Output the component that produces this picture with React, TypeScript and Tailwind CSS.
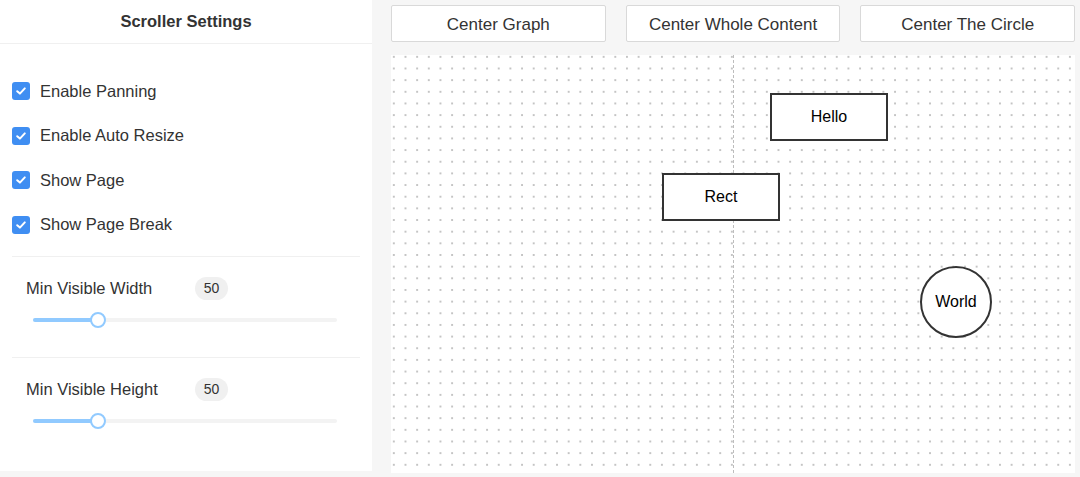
import React from "react";

function Check({ label }: { label: string }) {
  return (
    <div className="flex items-center h-[18px]">
      <div className="w-[18px] h-[18px] rounded-[3px] bg-[#3f8ef2] flex items-center justify-center">
        <svg width="12" height="12" viewBox="0 0 12 12">
          <path d="M2.2 6.2 L4.9 8.6 L9.8 3.4" fill="none" stroke="white" strokeWidth="2" strokeLinecap="round" strokeLinejoin="round" />
        </svg>
      </div>
      <span className="ml-[10px] text-[16.5px] text-[#333]">{label}</span>
    </div>
  );
}

function SliderBlock({ label }: { label: string }) {
  return (
    <div className="pl-[26px] pr-[24px]">
      <div className="flex items-center h-[24px]">
        <span className="w-[169px] text-[16.5px] text-[#333]">{label}</span>
        <span className="w-[33px] h-[23px] rounded-full bg-[#f0f0f0] text-[14px] text-[#333] flex items-center justify-center">50</span>
      </div>
      <div className="relative mt-[17px] ml-[7px] w-[304px] h-[4px] rounded-full bg-[#f3f3f3]">
        <div className="absolute left-0 top-0 h-[4px] w-[64px] rounded-full bg-[#91caff]" />
        <div className="absolute left-[57px] top-[-6px] w-[16px] h-[16px] rounded-full bg-white border-2 border-[#91caff]" />
      </div>
    </div>
  );
}

export default function App() {
  return (
    <div className="w-[1080px] h-[477px] bg-[#f6f6f6] flex font-['Liberation_Sans',Arial,sans-serif] overflow-hidden">
      <div className="w-[372px] h-[471px] bg-white flex flex-col">
        <div className="h-[44px] border-b border-[#f0f0f0] flex items-center justify-center text-[16.5px] font-semibold text-[#333]">
          Scroller Settings
        </div>
        <div className="pl-[12px] pt-[38px] flex flex-col gap-[26.5px]">
          <Check label="Enable Panning" />
          <Check label="Enable Auto Resize" />
          <Check label="Show Page" />
          <Check label="Show Page Break" />
        </div>
        <div className="mx-[12px] mt-[22px] border-t border-[#f0f0f0]" />
        <div className="pt-[20px] pb-[35px]">
          <SliderBlock label="Min Visible Width" />
        </div>
        <div className="mx-[12px] border-t border-[#f0f0f0]" />
        <div className="pt-[20px]">
          <SliderBlock label="Min Visible Height" />
        </div>
      </div>
      <div className="ml-[19px] w-[684px] flex flex-col">
        <div className="mt-[5px] flex gap-[20px]">
          {["Center Graph", "Center Whole Content", "Center The Circle"].map((t) => (
            <button key={t} className="w-[215px] h-[37px] pt-[2px] bg-white border border-[#d9d9d9] rounded-[2px] text-[17px] text-[#333]">
              {t}
            </button>
          ))}
        </div>
        <div
          className="relative mt-[13px] w-[684px] h-[418px] bg-white bg-[radial-gradient(circle,#c4c4c4_0.8px,transparent_1px)] bg-[length:11.67px_11.67px] bg-[position:-3px_-4px]"
        >
          <div className="absolute left-[342px] top-0 bottom-0 border-l border-dashed border-[#bdbdbd]" />
          <div className="absolute left-[379px] top-[38px] w-[118px] h-[48px] bg-white border-2 border-[#333] flex items-center justify-center text-[16px] text-black">
            Hello
          </div>
          <div className="absolute left-[271px] top-[118px] w-[118px] h-[48px] bg-white border-2 border-[#333] flex items-center justify-center text-[16px] text-black">
            Rect
          </div>
          <div className="absolute left-[529px] top-[211px] w-[72px] h-[72px] rounded-full bg-white border-2 border-[#333] flex items-center justify-center text-[16px] text-black">
            World
          </div>
        </div>
      </div>
    </div>
  );
}
